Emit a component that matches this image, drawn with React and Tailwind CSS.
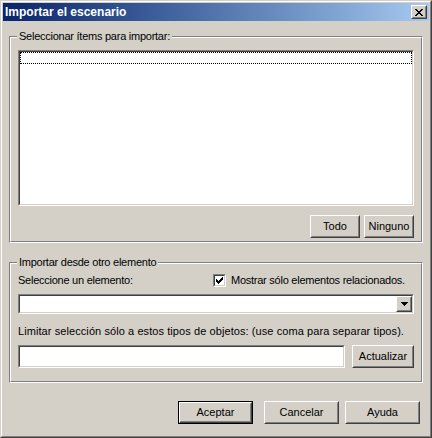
import React from 'react';

const FONT = { fontFamily: '"Liberation Sans", Arial, sans-serif' };

// pixel glyphs used by the classic controls
const CLOSE_X = ['11....11', '.11..11.', '..1111..', '...11...', '..1111..', '.11..11.', '11....11'];
const CHECK = ['......1', '.....11', '1...111', '11.111.', '11111..', '.111...', '..1....'];
const ARROW = ['1111111', '.11111.', '..111..', '...1...'];

function Glyph({ rows }) {
  const w = rows[0].length;
  const h = rows.length;
  const cells = [];
  rows.forEach((r, y) => r.split('').forEach((c, x) => {
    if (c === '1') cells.push(<rect key={`${x}-${y}`} x={x} y={y} width="1" height="1" />);
  }));
  return (
    <svg width={w} height={h} viewBox={`0 0 ${w} ${h}`} fill="#000" shapeRendering="crispEdges">
      {cells}
    </svg>
  );
}

function Raised({ className = '', children }) {
  return (
    <div className={'border border-t-white border-l-white border-r-[#404040] border-b-[#404040] bg-[#d4d0c8] ' + className}>
      <div className="h-full w-full border border-t-[#d4d0c8] border-l-[#d4d0c8] border-r-[#808080] border-b-[#808080] flex items-center justify-center">
        {children}
      </div>
    </div>
  );
}

function Button({ label, width = 'w-[75px]', isDefault = false }) {
  if (isDefault) {
    return (
      <div className={'h-[23px] border border-black ' + width}>
        <Raised className="h-full w-full">{label}</Raised>
      </div>
    );
  }
  return <Raised className={'h-[23px] ' + width}>{label}</Raised>;
}

function Sunken({ className = '', children }) {
  return (
    <div className={'border border-t-[#808080] border-l-[#808080] border-r-white border-b-white ' + className}>
      <div className="h-full w-full border border-t-[#404040] border-l-[#404040] border-r-[#d4d0c8] border-b-[#d4d0c8] bg-white">
        {children}
      </div>
    </div>
  );
}

function GroupBox({ title, className = '', children }) {
  return (
    <div className={'relative border border-t-[#808080] border-l-[#808080] border-r-white border-b-white ' + className}>
      <div className="h-full border border-t-white border-l-white border-r-[#808080] border-b-[#808080]">
        {children}
      </div>
      <span className="absolute left-[7px] top-[-8px] px-[2px] bg-[#d4d0c8] leading-[14px] tracking-[-0.25px]">{title}</span>
    </div>
  );
}

export default function App() {
  return (
    <div style={FONT} className="w-[432px] h-[438px] text-[11px] text-black bg-[#d4d0c8] border border-t-[#d4d0c8] border-l-[#d4d0c8] border-r-[#404040] border-b-[#404040] select-none">
      <div className="h-full p-px flex flex-col border border-t-white border-l-white border-r-[#808080] border-b-[#808080]">
        {/* title bar */}
        <div className="h-[18px] shrink-0 flex items-center justify-between pl-[2px] pr-[2px] bg-gradient-to-r from-[#0a246a] to-[#a6caf0]">
          <span className="text-white font-bold text-[12px] leading-[18px]">Importar el escenario</span>
          <Raised className="w-[16px] h-[14px]"><Glyph rows={CLOSE_X} /></Raised>
        </div>

        <div className="flex-1 px-[6px] pt-[15px] flex flex-col">
          <GroupBox title="Seleccionar ítems para importar:" className="h-[207px]">
            <div className="px-[7px] pt-[12px] pb-[5px] flex flex-col">
              <Sunken className="h-[156px]">
                <div className="h-[12px] border border-dotted border-black" />
              </Sunken>
              <div className="mt-[9px] flex justify-end gap-[4px]">
                <Button label="Todo" width="w-[50px]" />
                <Button label="Ninguno" width="w-[50px]" />
              </div>
            </div>
          </GroupBox>

          <GroupBox title="Importar desde otro elemento" className="mt-[19px] h-[121px]">
            <div className="px-[7px] pt-[9px] flex flex-col">
              <div className="h-[15px] flex items-center tracking-[-0.25px]">
                <span className="w-[195px]">Seleccione un elemento:</span>
                <Sunken className="w-[13px] h-[13px]">
                  <div className="h-full flex items-center justify-center"><Glyph rows={CHECK} /></div>
                </Sunken>
                <span className="ml-[5px]">Mostrar sólo elementos relacionados.</span>
              </div>
              <Sunken className="mt-[6px] h-[20px]">
                <div className="h-full flex justify-end">
                  <Raised className="w-[16px] h-[16px]"><Glyph rows={ARROW} /></Raised>
                </div>
              </Sunken>
              <div className="mt-[10px] h-[14px] leading-[14px] tracking-[0.08px]">
                Limitar selección sólo a estos tipos de objetos: (use coma para separar tipos).
              </div>
              <div className="mt-[7px] flex items-start">
                <Sunken className="flex-1 h-[23px]" />
                <Button label="Actualizar" width="ml-[7px] w-[62px]" />
              </div>
            </div>
          </GroupBox>

          <div className="mt-[18px] pr-[3px] flex justify-end">
            <Button label="Aceptar" isDefault />
            <div className="ml-[11px]"><Button label="Cancelar" /></div>
            <div className="ml-[6px]"><Button label="Ayuda" /></div>
          </div>
        </div>
      </div>
    </div>
  );
}
